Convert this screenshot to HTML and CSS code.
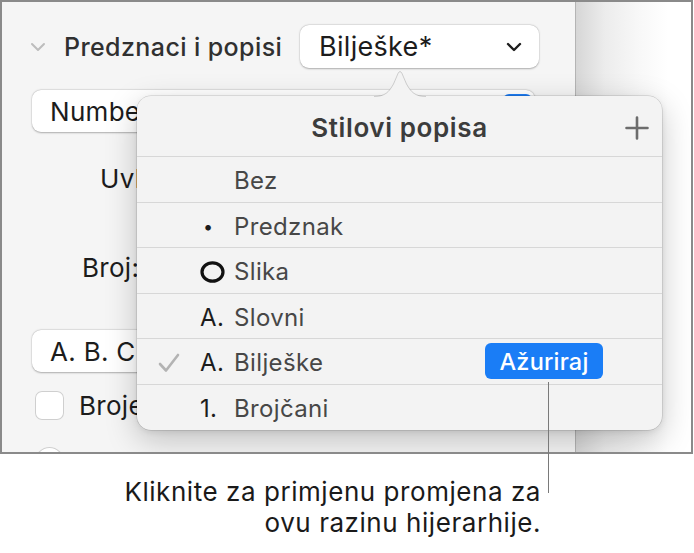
FILE: index.html
```html
<!DOCTYPE html>
<html lang="hr">
<head>
<meta charset="utf-8">
<title>Stilovi popisa</title>
<link rel="stylesheet" href="styles.css">
</head>
<body>
<div class="stage">
  <div class="frame">
    <div class="sidebar">
      <div class="section-head">
        <svg class="disclosure" width="16" height="10" viewBox="0 0 16 10"><polyline points="2,2 8,8 14,2" fill="none" stroke="#bdbdbd" stroke-width="2" stroke-linecap="round" stroke-linejoin="round"/></svg>
        <span class="section-title">Predznaci i popisi</span>
        <div class="popup style-popup">
          <span>Bilješke*</span>
          <svg width="16" height="10" viewBox="0 0 16 10"><polyline points="2,2 8,8 14,2" fill="none" stroke="#1e1e1e" stroke-width="2.4" stroke-linecap="round" stroke-linejoin="round"/></svg>
        </div>
      </div>
      <div class="popup type-popup">
        <span class="type-text">Numbe</span>
        <span class="blue-end"></span>
      </div>
      <div class="label-row indent-label">Uvl</div>
      <div class="label-row num-label">Broj:</div>
      <div class="popup abc-popup"><span>A. B. C.</span></div>
      <div class="check-row">
        <span class="checkbox"></span>
        <span>Broje</span>
      </div>
      <div class="radio-row"><span class="radio"></span></div>
    </div>
    <div class="canvas"></div>

    <div class="popover">
      <svg class="arrow" width="52" height="28" viewBox="0 0 52 28">
        <path d="M0 27.5 C11 27.5 15 23 19.5 15 L24 4.5 Q26 0.5 28 4.5 L32.5 15 C37 23 41 27.5 52 27.5 L52 28 L0 28 Z" fill="#f3f3f3"/>
        <path d="M0 27.5 C11 27.5 15 23 19.5 15 L24 4.5 Q26 0.5 28 4.5 L32.5 15 C37 23 41 27.5 52 27.5" fill="none" stroke="rgba(0,0,0,0.16)" stroke-width="1"/>
      </svg>
      <div class="pop-head">
        <span class="pop-title">Stilovi popisa</span>
        <svg class="plus" width="24" height="24" viewBox="0 0 24 24"><path d="M12 1.5 V22.5 M1.5 12 H22.5" stroke="#6c6c6c" stroke-width="2.6" stroke-linecap="round"/></svg>
      </div>
      <div class="pop-row"><span class="mark"></span><span class="prefix"></span><span class="name">Bez</span></div>
      <div class="pop-row"><span class="mark"></span><span class="prefix bullet">•</span><span class="name">Predznak</span></div>
      <div class="pop-row"><span class="mark"></span><span class="prefix"><svg width="28" height="22" viewBox="0 0 28 22"><ellipse cx="12.5" cy="11" rx="10.5" ry="9.2" fill="none" stroke="#111" stroke-width="3.2"/></svg></span><span class="name">Slika</span></div>
      <div class="pop-row"><span class="mark"></span><span class="prefix">A.</span><span class="name">Slovni</span></div>
      <div class="pop-row"><span class="mark"><svg width="22" height="20" viewBox="0 0 22 20"><polyline points="2,11 8,17.5 20,2" fill="none" stroke="#b3b3b3" stroke-width="2.6" stroke-linecap="round" stroke-linejoin="round"/></svg></span><span class="prefix">A.</span><span class="name">Bilješke</span><span class="update">Ažuriraj</span></div>
      <div class="pop-row"><span class="mark"></span><span class="prefix">1.</span><span class="name">Brojčani</span></div>
    </div>
  </div>
  <div class="callout-line"></div>
  <p class="caption">Kliknite za primjenu promjena za<br>ovu razinu hijerarhije.</p>
</div>
</body>
</html>
```
FILE: styles.css
```css
* { box-sizing: border-box; }
html, body {
  margin: 0;
  padding: 0;
  background: #ffffff;
}
body {
  font-family: Inter, "Noto Sans", "Liberation Sans", sans-serif;
  color: #1c1c1c;
  width: 694px;
  height: 553px;
  overflow: hidden;
}
.stage {
  position: relative;
  width: 694px;
  height: 553px;
}
.frame {
  position: relative;
  width: 693px;
  height: 454px;
  border: 2px solid #8a8a8a;
  display: flex;
  overflow: hidden;
}
.sidebar {
  width: 574px;
  background: #f5f5f5;
  border-right: 1px solid #b4b4b4;
  display: flex;
  flex-direction: column;
  align-items: flex-start;
}
.sidebar > * {
  flex-shrink: 0;
}
.canvas {
  flex: 1;
  background: linear-gradient(to right, #d6d6d6 0%, #ececec 25%, #f8f8f8 55%, #ffffff 80%);
}

/* section header */
.section-head {
  margin-top: 23px;
  height: 43px;
  display: flex;
  align-items: center;
}
.disclosure {
  margin-left: 28px;
  margin-top: 1px;
}
.section-title {
  margin-left: 18px;
  width: 236px;
  font-size: 25px;
  font-weight: 500;
  color: #303030;
  letter-spacing: 0.4px;
  white-space: nowrap;
}
.popup {
  background: #ffffff;
  border-radius: 9px;
  box-shadow: 0 0.5px 2px rgba(0,0,0,0.28), 0 0 0 0.5px rgba(0,0,0,0.06);
  font-size: 26px;
  letter-spacing: 0.3px;
  color: #1c1c1c;
  display: flex;
  align-items: center;
  white-space: nowrap;
}
.style-popup {
  width: 239px;
  height: 43px;
  padding: 0 17px 0 19px;
  justify-content: space-between;
  font-size: 27px;
}
.type-popup {
  margin-left: 30px;
  margin-top: 22px;
  width: 503px;
  height: 42px;
  padding-left: 18px;
  position: relative;
}
.blue-end {
  margin-left: auto;
  margin-right: 3px;
  width: 29px;
  height: 34px;
  border-radius: 6px;
  background: #1f7ef6;
}
.label-row {
  font-size: 26px;
  letter-spacing: 0.3px;
  color: #1c1c1c;
  height: 30px;
  display: flex;
  align-items: center;
  white-space: nowrap;
}
.indent-label {
  margin-top: 31px;
  margin-left: 98px;
}
.num-label {
  margin-top: 59px;
  margin-left: 80px;
}
.abc-popup {
  margin-left: 30px;
  margin-top: 48px;
  width: 300px;
  height: 42px;
  padding-left: 18px;
}
.check-row {
  margin-top: 19px;
  margin-left: 33px;
  height: 29px;
  display: flex;
  align-items: center;
  font-size: 26px;
  letter-spacing: 0.3px;
  color: #1c1c1c;
  white-space: nowrap;
}
.checkbox {
  width: 29px;
  height: 29px;
  border-radius: 7px;
  background: #ffffff;
  box-shadow: inset 0 0 0 1px #cfcfcf;
  margin-right: 15px;
  flex-shrink: 0;
}
.radio-row {
  margin-top: 27px;
  margin-left: 33px;
}
.radio {
  display: block;
  width: 29px;
  height: 29px;
  border-radius: 50%;
  background: #fff;
  box-shadow: inset 0 0 0 1px #cfcfcf;
}

/* popover */
.popover {
  position: absolute;
  left: 135px;
  top: 94px;
  width: 525px;
  height: 334px;
  background: #f3f3f3;
  border-radius: 14px;
  box-shadow: 0 0 0 0.5px rgba(0,0,0,0.18), 0 10px 32px rgba(0,0,0,0.22), 0 2px 6px rgba(0,0,0,0.08);
  z-index: 2;
}
.arrow {
  position: absolute;
  left: 237px;
  top: -27px;
}
.pop-head {
  height: 60px;
  display: flex;
  align-items: center;
  justify-content: center;
  position: relative;
}
.pop-title {
  font-size: 26px;
  font-weight: 600;
  letter-spacing: 0.6px;
  color: #3c3c3c;
  margin-top: 3px;
}
.plus {
  position: absolute;
  right: 13px;
  top: 20px;
}
.pop-row {
  height: 45.5px;
  border-top: 1px solid #d7d7d7;
  display: flex;
  align-items: center;
  font-size: 24px;
  letter-spacing: 0.35px;
  padding-top: 3px;
}
.mark {
  width: 63px;
  display: flex;
  justify-content: center;
  align-items: center;
}
.prefix {
  width: 34px;
  color: #1c1c1c;
  display: flex;
  align-items: center;
}
.bullet {
  padding-left: 3px;
  font-size: 18px;
}
.name {
  color: #474747;
}
.update {
  margin-left: auto;
  margin-right: 59px;
  width: 118px;
  height: 36px;
  border-radius: 6px;
  background: #1a7df6;
  color: #ffffff;
  font-size: 23.5px;
  font-weight: 500;
  letter-spacing: 0.2px;
  display: flex;
  align-items: center;
  justify-content: center;
  margin-top: -3px;
}

/* callout */
.callout-line {
  position: absolute;
  left: 548px;
  top: 382px;
  width: 1px;
  height: 111px;
  background: #7a7a7a;
  z-index: 3;
}
.caption {
  margin: 22px 0 0 0;
  width: 541px;
  text-align: right;
  font-size: 26px;
  letter-spacing: 0.55px;
  line-height: 31px;
  color: #1a1a1a;
}
```
